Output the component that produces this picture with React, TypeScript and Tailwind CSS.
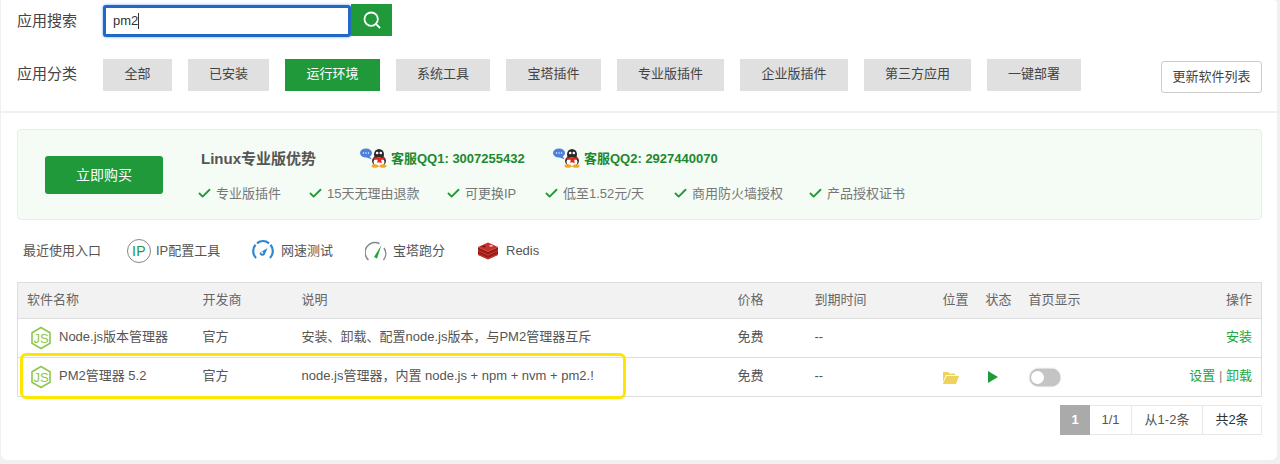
import { Search, Check } from "lucide-react";

const categories = [
  { label: "全部", width: "w-[69px]" },
  { label: "已安装", width: "w-[81px]" },
  { label: "运行环境", width: "w-[95px]", active: true },
  { label: "系统工具", width: "w-[94px]" },
  { label: "宝塔插件", width: "w-[95px]" },
  { label: "专业版插件", width: "w-[107px]" },
  { label: "企业版插件", width: "w-[108px]" },
  { label: "第三方应用", width: "w-[107px]" },
  { label: "一键部署", width: "w-[94px]" },
];

const perks = [
  { label: "专业版插件", width: "w-[111px]" },
  { label: "15天无理由退款", width: "w-[138px]" },
  { label: "可更换IP", width: "w-[98px]" },
  { label: "低至1.52元/天", width: "w-[129px]" },
  { label: "商用防火墙授权", width: "w-[135px]" },
  { label: "产品授权证书", width: "w-[110px]" },
];

const NodeIcon = () => (
  <svg width="22" height="24" viewBox="0 0 22 24" className="shrink-0">
    <path d="M11 1.500 20 6.700V17.300L11 22.500 2 17.300V6.700Z" fill="none" stroke="#8cc84b" strokeWidth="1.600" strokeLinejoin="round" />
    <text x="11" y="16.800" textAnchor="middle" fontSize="13" fontFamily="Liberation Sans" fill="#8cc84b">JS</text>
  </svg>
);

const QQIcon = () => (
  <svg width="27" height="20" viewBox="0 0 27 20" className="shrink-0">
    <ellipse cx="6" cy="5" rx="6" ry="4.600" fill="#4f7fdc" />
    <path d="M6 9 11.500 11.500 9 7Z" fill="#4f7fdc" />
    <circle cx="3.500" cy="5" r=".7" fill="#fff" />
    <circle cx="6" cy="5" r=".7" fill="#fff" />
    <circle cx="8.500" cy="5" r=".7" fill="#fff" />
    <ellipse cx="19" cy="6.500" rx="5" ry="5.500" fill="#2a2a2a" />
    <ellipse cx="19" cy="13" rx="7" ry="5.500" fill="#2a2a2a" />
    <ellipse cx="19" cy="14" rx="5.500" ry="4.500" fill="#fff" />
    <circle cx="17.200" cy="5" r="1.300" fill="#fff" />
    <circle cx="20.800" cy="5" r="1.300" fill="#fff" />
    <path d="M13.500 9.500h11v2.300h-3.300l.5 3.500-2.500-1-2 .5.500-3h-4.200Z" fill="#e0281e" />
    <ellipse cx="15" cy="18" rx="3.500" ry="1.800" fill="#f5a623" />
    <ellipse cx="23" cy="18" rx="3.500" ry="1.800" fill="#f5a623" />
  </svg>
);

const SpeedIcon = () => (
  <svg width="22" height="22" viewBox="0 0 22 22" fill="none" className="shrink-0">
    <path d="M4.070 17.930A9.800 9.800 0 0 1 3.490 4.700" stroke="#2f86d0" strokeWidth="2.200" />
    <path d="M4.970 3.280A9.800 9.800 0 0 1 17.030 3.280" stroke="#2f86d0" strokeWidth="2.200" />
    <path d="M18.510 4.700A9.800 9.800 0 0 1 17.930 17.930" stroke="#2f86d0" strokeWidth="2.200" />
    <path d="M7.500 13 15.500 8 12.800 14.500A2.900 2.900 0 0 1 7.500 13Z" fill="#2f86d0" />
    <circle cx="10.200" cy="12.800" r="1" fill="#fff" />
  </svg>
);

const ScoreIcon = () => (
  <svg width="22" height="22" viewBox="0 0 22 22" fill="none" className="shrink-0">
    <path d="M3.500 20A10 10 0 0 1 14.500 3.500" stroke="#888" strokeWidth="1.500" />
    <path d="M19 8A10 10 0 0 1 18.500 20" stroke="#888" strokeWidth="1.500" />
    <path d="M9 17 16.500 5 12 18.500Z" fill="#20a53a" />
  </svg>
);

const RedisIcon = () => (
  <svg width="20" height="18" viewBox="0 0 20 18" className="shrink-0">
    <path d="M0 5v8l10 4.500L20 13V5L10 9.500Z" fill="#9c1c18" />
    <path d="M0 8.500 10 13 20 8.500" fill="none" stroke="#d04a40" strokeWidth=".7" />
    <path d="M0 12 10 16.500 20 12" fill="none" stroke="#d04a40" strokeWidth=".7" />
    <path d="M10 .5 20 5 10 9.500 0 5Z" fill="#c9302a" />
    <path d="M3.500 4.500 7 3.500 7.500 5.500Z" fill="#5c1210" />
    <ellipse cx="13" cy="3.800" rx="1.800" ry=".9" fill="#f2d0cc" />
  </svg>
);

const FolderIcon = () => (
  <svg width="17" height="13" viewBox="0 0 17 13" className="shrink-0">
    <path d="M1 1h5l1.500 1.500H13V4H4L1 11Z" fill="#edd35c" />
    <path d="M4.500 5H17l-3 8H0.800Z" fill="#edd35c" />
  </svg>
);

const App = () => {
  return (
    <div className="h-[464px] bg-[#f0f0f0] pl-px pr-[3px] text-[#555] overflow-hidden font-['Liberation_Sans','Noto_Sans_CJK_SC',sans-serif]">
      <section className="h-[111px] bg-white pl-4 pr-[15px] rounded-tr-sm">
        <div className="flex items-start pt-1">
          <label className="w-[86px] pt-[7px] text-[15px] leading-5 text-[#444]">应用搜索</label>
          <div className="h-8 w-[248px] mt-px rounded-[3px] border-[3px] border-[#2168c8] shadow-[0_0_3px_#6ea4ea] flex items-center pl-[7px] text-[13px] text-[#333] bg-white">
            pm2<span className="w-px h-4 bg-[#333]" />
          </div>
          <button className="w-[41px] h-8 bg-[#20993a] flex items-center justify-center">
            <Search size={20} color="#fff" strokeWidth={2.200} />
          </button>
        </div>
        <div className="flex items-start mt-[22px]">
          <label className="w-[86px] pt-[5px] text-[15px] leading-5 text-[#444]">应用分类</label>
          <div className="flex gap-4 flex-1">
            {categories.map((c) => (
              <div
                key={c.label}
                className={`${c.width} h-8 pb-[2px] flex items-center justify-center text-[13px] ${c.active ? "bg-[#20993a] text-white" : "bg-[#e0e0e0] text-[#444]"}`}
              >
                {c.label}
              </div>
            ))}
          </div>
          <button className="w-[101px] h-8 mt-[2px] border border-[#ccc] rounded-[3px] text-[13px] text-[#444] bg-white">
            更新软件列表
          </button>
        </div>
      </section>

      <section className="mt-[2px] h-[347px] bg-white pl-4 pr-[15px] pt-4 rounded-b-md">
        <div className="h-[91px] bg-[#f4fcf5] border border-[#e8efe9] rounded flex items-start">
          <button className="w-[118px] h-[38px] ml-[27px] mt-[26px] rounded-[3px] bg-[#20993a] text-white text-sm">
            立即购买
          </button>
          <div className="ml-[38px]">
            <div className="flex items-center h-[22px] mt-[18px]">
              <span className="w-[159px] text-[15px] font-bold text-[#555]">Linux专业版优势</span>
              <div className="flex items-center w-[193px] -mt-[3px]">
                <QQIcon />
                <span className="ml-1 mt-[3px] text-[13px] font-bold text-[#20882f]">客服QQ1: 3007255432</span>
              </div>
              <div className="flex items-center -mt-[3px]">
                <QQIcon />
                <span className="ml-1 mt-[3px] text-[13px] font-bold text-[#20882f]">客服QQ2: 2927440070</span>
              </div>
            </div>
            <div className="flex items-center mt-[14px] -ml-[4px]">
              {perks.map((p) => (
                <div key={p.label} className={`${p.width} flex items-center gap-1 text-[13px] text-[#777]`}>
                  <Check size={15} color="#20993a" strokeWidth={3} />
                  {p.label}
                </div>
              ))}
            </div>
          </div>
        </div>

        <div className="flex items-center h-[32px] mt-[15px] pl-[6px] text-[13px] text-[#555]">
          <span className="w-[104px]">最近使用入口</span>
          <div className="flex items-center gap-[5px] w-[125px]">
            <span className="w-6 h-6 rounded-full border border-[#888] text-[#20993a] text-sm flex items-center justify-center tracking-wide">IP</span>
            IP配置工具
          </div>
          <div className="flex items-center gap-[7px] w-[113px]">
            <SpeedIcon />
            网速测试
          </div>
          <div className="flex items-center gap-[6px] w-[113px]">
            <ScoreIcon />
            宝塔跑分
          </div>
          <div className="flex items-center gap-[8px]">
            <RedisIcon />
            Redis
          </div>
        </div>

        <div className="relative mt-[15px]">
          <table className="w-full table-fixed border-collapse border border-[#ddd] text-[13px]">
            <colgroup>
              <col className="w-[176px]" />
              <col className="w-[99px]" />
              <col className="w-[436px]" />
              <col className="w-[77px]" />
              <col className="w-[128px]" />
              <col className="w-[43px]" />
              <col className="w-[43px]" />
              <col className="w-[100px]" />
              <col />
            </colgroup>
            <thead>
              <tr className="h-[36px] bg-[#f2f2f2] text-left text-[#666]">
                <th className="pl-[9px] pb-[2px] font-normal">软件名称</th>
                <th className="pl-[9px] pb-[2px] font-normal">开发商</th>
                <th className="pl-[9px] pb-[2px] font-normal">说明</th>
                <th className="pl-[9px] pb-[2px] font-normal">价格</th>
                <th className="pl-[9px] pb-[2px] font-normal">到期时间</th>
                <th className="pl-[9px] pb-[2px] font-normal">位置</th>
                <th className="pl-[9px] pb-[2px] font-normal">状态</th>
                <th className="pl-[9px] pb-[2px] font-normal">首页显示</th>
                <th className="pr-[9px] pb-[2px] font-normal text-right">操作</th>
              </tr>
            </thead>
            <tbody>
              <tr className="h-[39px] border-t border-[#ddd]">
                <td className="pl-3">
                  <div className="flex items-center gap-[7px]">
                    <NodeIcon />
                    <span className="pb-[2px]">Node.js版本管理器</span>
                  </div>
                </td>
                <td className="pl-[9px] pb-[2px]">官方</td>
                <td className="pl-[9px] pb-[2px]">安装、卸载、配置node.js版本，与PM2管理器互斥</td>
                <td className="pl-[9px] pb-[2px]">免费</td>
                <td className="pl-[9px] pb-[2px]">--</td>
                <td />
                <td />
                <td />
                <td className="pr-[9px] pb-[2px] text-right text-[#20a53a]">安装</td>
              </tr>
              <tr className="h-[39px] border-t border-[#ddd]">
                <td className="pl-3">
                  <div className="flex items-center gap-[7px]">
                    <NodeIcon />
                    <span className="pb-[2px]">PM2管理器 5.2</span>
                  </div>
                </td>
                <td className="pl-[9px] pb-[2px]">官方</td>
                <td className="pl-[9px] pb-[2px]">node.js管理器，内置 node.js + npm + nvm + pm2.!</td>
                <td className="pl-[9px] pb-[2px]">免费</td>
                <td className="pl-[9px] pb-[2px]">--</td>
                <td className="pl-[8px]"><FolderIcon /></td>
                <td className="pl-[9px]">
                  <div className="w-0 h-0 ml-[2px] border-l-[10px] border-l-[#20993a] border-y-[6px] border-y-transparent" />
                </td>
                <td className="pl-[10px]">
                  <div className="w-[30px] h-[17px] rounded-full bg-[#c4c4c4] shadow-[0_0_2px_#888] flex items-center pl-px">
                    <div className="w-[13px] h-[13px] rounded-full bg-white" />
                  </div>
                </td>
                <td className="pr-[9px] pb-[2px] text-right text-[#20a53a]">
                  设置 <span className="text-[#888]">|</span> 卸载
                </td>
              </tr>
            </tbody>
          </table>
          <div className="absolute left-[3px] top-[71px] w-[606px] h-[46px] border-[3px] border-[#ffe600] rounded-md" />
          <div className="flex justify-end mt-[8px] text-[13px] text-[#555]">
            <span className="w-[30px] h-[30px] bg-[#aaa] text-white flex items-center justify-center font-bold">1</span>
            <span className="w-[42px] h-[30px] border-y border-r border-[#e8e8e8] flex items-center justify-center">1/1</span>
            <span className="w-[71px] h-[30px] border-y border-r border-[#e8e8e8] flex items-center justify-center">从1-2条</span>
            <span className="w-[59px] h-[30px] border-y border-r border-[#e8e8e8] flex items-center justify-center text-[#333]">共2条</span>
          </div>
        </div>
      </section>
    </div>
  );
};

export default App;
